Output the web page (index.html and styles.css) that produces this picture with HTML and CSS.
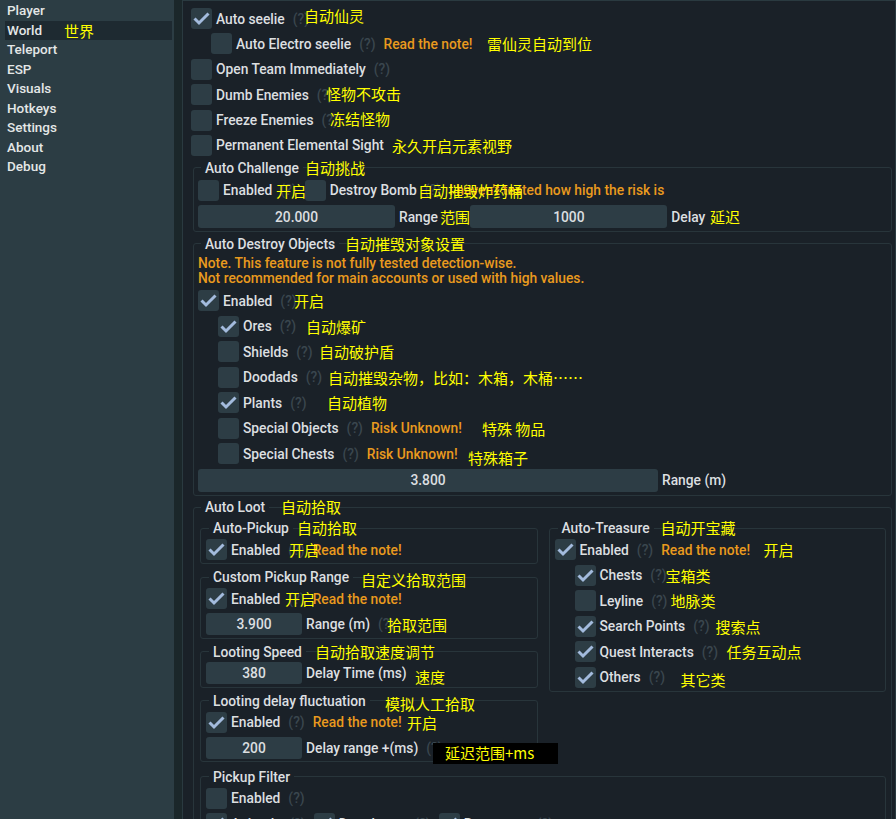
FILE: index.html
```html
<!DOCTYPE html>
<html lang="en">
<head>
<meta charset="utf-8">
<title>World</title>
<link rel="stylesheet" href="styles.css">
</head>
<body>
<div class="app">
  <nav class="sidebar">
    <div class="nav-item">Player</div>
    <div class="nav-item active">World<span class="ann a-world">世界</span></div>
    <div class="nav-item">Teleport</div>
    <div class="nav-item">ESP</div>
    <div class="nav-item">Visuals</div>
    <div class="nav-item">Hotkeys</div>
    <div class="nav-item">Settings</div>
    <div class="nav-item">About</div>
    <div class="nav-item">Debug</div>
  </nav>

  <main class="panel">
    <div class="stack top">
      <div class="row"><span class="cb on"><svg viewBox="0 0 21 21"><path d="M3.5 10.5 L8 15 L17.5 5.5"/></svg></span><span class="lbl">Auto seelie</span><span class="q">(?)</span><span class="ann a-seelie">自动仙灵</span></div>
      <div class="row indent"><span class="cb"></span><span class="lbl">Auto Electro seelie</span><span class="q">(?)</span><span class="warn">Read the note!</span><span class="ann a-electro">雷仙灵自动到位</span></div>
      <div class="row"><span class="cb"></span><span class="lbl">Open Team Immediately</span><span class="q">(?)</span></div>
      <div class="row"><span class="cb"></span><span class="lbl">Dumb Enemies</span><span class="q">(?)</span><span class="ann a-dumb">怪物不攻击</span></div>
      <div class="row"><span class="cb"></span><span class="lbl">Freeze Enemies</span><span class="q">(?)</span><span class="ann a-freeze">冻结怪物</span></div>
      <div class="row"><span class="cb"></span><span class="lbl">Permanent Elemental Sight</span><span class="ann a-sight">永久开启元素视野</span></div>

      <fieldset class="frame first">
        <legend>Auto Challenge<span class="ann lg a-lg-ac">自动挑战</span></legend>
        <div class="stack">
          <div class="row"><span class="cb"></span><span class="lbl">Enabled</span><span class="q">(?)</span><span class="cb gap"></span><span class="lbl">Destroy Bomb</span><span class="q">(?)</span><span class="warn">I haven't tested how high the risk is</span><span class="ann a-ac-en">开启</span><span class="ann a-bomb">自动摧毁炸药桶</span></div>
          <div class="row tall"><span class="inp w-half">20.000</span><span class="lbl2">Range</span><span class="q">(?)</span><span class="inp w-half gap">1000</span><span class="lbl2">Delay</span><span class="ann a-range">范围</span><span class="ann a-delay">延迟</span></div>
        </div>
      </fieldset>

      <fieldset class="frame">
        <legend>Auto Destroy Objects<span class="ann lg a-lg-ad">自动摧毁对象设置</span></legend>
        <div class="stack">
          <p class="note">Note. This feature is not fully tested detection-wise.<br>Not recommended for main accounts or used with high values.</p>
          <div class="row"><span class="cb on"><svg viewBox="0 0 21 21"><path d="M3.5 10.5 L8 15 L17.5 5.5"/></svg></span><span class="lbl">Enabled</span><span class="q">(?)</span><span class="ann a-ad-en">开启</span></div>
          <div class="row indent"><span class="cb on"><svg viewBox="0 0 21 21"><path d="M3.5 10.5 L8 15 L17.5 5.5"/></svg></span><span class="lbl">Ores</span><span class="q">(?)</span><span class="ann a-ores">自动爆矿</span></div>
          <div class="row indent"><span class="cb"></span><span class="lbl">Shields</span><span class="q">(?)</span><span class="ann a-shields">自动破护盾</span></div>
          <div class="row indent"><span class="cb"></span><span class="lbl">Doodads</span><span class="q">(?)</span><span class="ann a-doodads">自动摧毁杂物，比如：木箱，木桶……</span></div>
          <div class="row indent"><span class="cb on"><svg viewBox="0 0 21 21"><path d="M3.5 10.5 L8 15 L17.5 5.5"/></svg></span><span class="lbl">Plants</span><span class="q">(?)</span><span class="ann a-plants">自动植物</span></div>
          <div class="row indent"><span class="cb"></span><span class="lbl">Special Objects</span><span class="q">(?)</span><span class="warn">Risk Unknown!</span><span class="ann a-specobj">特殊 物品</span></div>
          <div class="row indent"><span class="cb"></span><span class="lbl">Special Chests</span><span class="q">(?)</span><span class="warn">Risk Unknown!</span><span class="ann a-specchest">特殊箱子</span></div>
          <div class="row tall"><span class="inp w-wide">3.800</span><span class="lbl2">Range (m)</span></div>
        </div>
      </fieldset>

      <fieldset class="frame loot">
        <legend>Auto Loot<span class="ann lg a-lg-al">自动拾取</span></legend>
        <div class="cols">
          <div class="col">
            <fieldset class="frame sub">
              <legend>Auto-Pickup<span class="ann lg a-lg-ap">自动拾取</span></legend>
              <div class="stack">
                <div class="row"><span class="cb on"><svg viewBox="0 0 21 21"><path d="M3.5 10.5 L8 15 L17.5 5.5"/></svg></span><span class="lbl">Enabled</span><span class="q">(?)</span><span class="warn">Read the note!</span><span class="ann a-ap-en">开启</span></div>
              </div>
            </fieldset>
            <fieldset class="frame sub">
              <legend>Custom Pickup Range<span class="ann lg a-lg-cp">自定义拾取范围</span></legend>
              <div class="stack">
                <div class="row"><span class="cb on"><svg viewBox="0 0 21 21"><path d="M3.5 10.5 L8 15 L17.5 5.5"/></svg></span><span class="lbl">Enabled</span><span class="q">(?)</span><span class="warn">Read the note!</span><span class="ann a-cp-en">开启</span></div>
                <div class="row"><span class="inp w-small">3.900</span><span class="lbl2">Range (m)</span><span class="q">(?)</span><span class="ann a-cp-range">拾取范围</span></div>
              </div>
            </fieldset>
            <fieldset class="frame sub">
              <legend>Looting Speed<span class="ann lg a-lg-ls">自动拾取速度调节</span></legend>
              <div class="stack">
                <div class="row"><span class="inp w-small">380</span><span class="lbl2">Delay Time (ms)</span><span class="ann a-ls-speed">速度</span></div>
              </div>
            </fieldset>
            <fieldset class="frame sub">
              <legend>Looting delay fluctuation<span class="ann lg a-lg-ld">模拟人工拾取</span></legend>
              <div class="stack">
                <div class="row"><span class="cb on"><svg viewBox="0 0 21 21"><path d="M3.5 10.5 L8 15 L17.5 5.5"/></svg></span><span class="lbl">Enabled</span><span class="q">(?)</span><span class="warn">Read the note!</span><span class="ann a-ld-en">开启</span></div>
                <div class="row"><span class="inp w-small">200</span><span class="lbl2">Delay range +(ms)</span><span class="q">(?)</span><span class="ann a-ld-box">延迟范围+ms</span></div>
              </div>
            </fieldset>
          </div>

          <div class="col">
            <fieldset class="frame sub">
              <legend>Auto-Treasure<span class="ann lg a-lg-at">自动开宝藏</span></legend>
              <div class="stack">
                <div class="row"><span class="cb on"><svg viewBox="0 0 21 21"><path d="M3.5 10.5 L8 15 L17.5 5.5"/></svg></span><span class="lbl">Enabled</span><span class="q">(?)</span><span class="warn">Read the note!</span><span class="ann a-at-en">开启</span></div>
                <div class="row indent"><span class="cb on"><svg viewBox="0 0 21 21"><path d="M3.5 10.5 L8 15 L17.5 5.5"/></svg></span><span class="lbl">Chests</span><span class="q">(?)</span><span class="ann a-chests">宝箱类</span></div>
                <div class="row indent"><span class="cb"></span><span class="lbl">Leyline</span><span class="q">(?)</span><span class="ann a-leyline">地脉类</span></div>
                <div class="row indent"><span class="cb on"><svg viewBox="0 0 21 21"><path d="M3.5 10.5 L8 15 L17.5 5.5"/></svg></span><span class="lbl">Search Points</span><span class="q">(?)</span><span class="ann a-search">搜索点</span></div>
                <div class="row indent"><span class="cb on"><svg viewBox="0 0 21 21"><path d="M3.5 10.5 L8 15 L17.5 5.5"/></svg></span><span class="lbl">Quest Interacts</span><span class="q">(?)</span><span class="ann a-quest">任务互动点</span></div>
                <div class="row indent"><span class="cb on"><svg viewBox="0 0 21 21"><path d="M3.5 10.5 L8 15 L17.5 5.5"/></svg></span><span class="lbl">Others</span><span class="q">(?)</span><span class="ann a-others">其它类</span></div>
              </div>
            </fieldset>
          </div>

          <fieldset class="frame sub span">
            <legend>Pickup Filter</legend>
            <div class="stack">
              <div class="row"><span class="cb"></span><span class="lbl">Enabled</span><span class="q">(?)</span></div>
              <div class="row"><span class="cb on"><svg viewBox="0 0 21 21"><path d="M3.5 10.5 L8 15 L17.5 5.5"/></svg></span><span class="lbl">Animals</span><span class="q">(?)</span><span class="cb on gap"><svg viewBox="0 0 21 21"><path d="M3.5 10.5 L8 15 L17.5 5.5"/></svg></span><span class="lbl">Drop Items</span><span class="q">(?)</span><span class="cb on gap"><svg viewBox="0 0 21 21"><path d="M3.5 10.5 L8 15 L17.5 5.5"/></svg></span><span class="lbl">Resources</span><span class="q">(?)</span></div>
            </div>
          </fieldset>
        </div>
      </fieldset>
    </div>
  </main>
</div>
</body>
</html>
```

FILE: styles.css
```css
* { box-sizing: border-box; }

html, body {
  margin: 0;
  height: 100%;
}

body {
  background: #1b272a;
  font-family: Roboto, "Noto Sans", sans-serif;
  font-weight: 500;
  font-size: 13.8px;
  color: #dcdfe0;
  overflow: hidden;
}

.app {
  display: flex;
  height: 819px;
}

/* ---------- sidebar ---------- */
.sidebar {
  width: 174px;
  flex: none;
  background: #2c3d44;
  padding-top: 1.25px;
  font-size: 13.5px;
}

.nav-item {
  position: relative;
  height: 19.5px;
  line-height: 19.5px;
  margin: 0 2px 0 5px;
  padding-left: 2px;
  color: #e4e7e7;
}

.nav-item.active {
  background: #1e2a31;
}

/* ---------- main panel ---------- */
.panel {
  flex: 1;
  margin-left: 8px;
  background: #1a2128;
  border: 1px solid #2a3a40;
  border-bottom: none;
  padding: 7px 3px 0 8px;
  overflow: hidden;
}

.stack {
  display: flex;
  flex-direction: column;
  gap: 4.5px;
}

.stack.top { gap: 4.4px; }

.row {
  position: relative;
  display: flex;
  align-items: center;
  height: 21px;
  white-space: nowrap;
}

.row.tall { height: 23px; }

.row.indent { padding-left: 20px; }

.cb {
  flex: none;
  width: 21px;
  height: 21px;
  border-radius: 3px;
  background: #2d3d45;
}

.cb svg {
  display: block;
  width: 21px;
  height: 21px;
  fill: none;
  stroke: #a3bbdd;
  stroke-width: 3;
}

.cb.gap { margin-left: 8px; }

.lbl { margin-left: 4px; }
.lbl2 { margin-left: 4px; }

.q {
  margin-left: 8px;
  color: #3a474f;
}

.warn {
  margin-left: 8px;
  color: #e99a1e;
}

.inp {
  flex: none;
  display: flex;
  align-items: center;
  justify-content: center;
  height: 100%;
  border-radius: 3px;
  background: #2d3d45;
  color: #dcdfe0;
}

.row:not(.tall) .inp { height: 22px; }

.inp.gap { margin-left: 8px; }

.w-half { width: 197px; }
.w-wide { width: 460px; }
.w-small { width: 96px; }

.note {
  margin: 0;
  color: #e99a1e;
  line-height: 15px;
  white-space: nowrap;
}

/* ---------- frames ---------- */
.frame {
  min-width: 0;
  margin: 0 0 0 2px;
  padding: 5px 4px 3px 4px;
  border: 1px solid #28353b;
  border-radius: 3px;
}

.frame.first { margin-top: 0.5px; }

.frame > legend {
  position: relative;
  margin-left: 3px;
  padding: 0 4px;
  line-height: 14px;
  white-space: nowrap;
}

.frame.loot { padding-right: 5px; }

.frame.sub {
  margin: 0;
  padding: 4px 3px 3px 5px;
}

.cols {
  display: grid;
  grid-template-columns: 1fr 1fr;
  column-gap: 11px;
  row-gap: 7.5px;
  padding-left: 2px;
  margin-top: 2px;
  align-items: start;
}

.col {
  display: flex;
  flex-direction: column;
  gap: 6px;
}

.span { grid-column: 1 / -1; }

/* ---------- yellow annotations (overlay callouts) ---------- */
.ann {
  position: absolute;
  top: 0;
  line-height: 21px;
  font-family: "Noto Sans CJK SC", sans-serif;
  font-weight: 400;
  font-size: 15px;
  color: #ffff00;
  white-space: nowrap;
}

.ann.lg {
  line-height: 14px;
}

.nav-item .ann { line-height: 19.5px; font-size: 15px; }

.a-world { left: 59px; }

.a-seelie { left: 113px; top: -3px; }
.a-electro { left: 296px; }
.a-dumb { left: 135px; top: -1.5px; }
.a-freeze { left: 139px; top: -2px; }
.a-sight { left: 201px; }

.a-lg-ac { left: 104px; }
.a-ac-en { left: 78px; }
.a-bomb { left: 220px; }
.a-range { left: 242px; top: 1px; }
.a-delay { left: 512px; top: 1px; }

.a-lg-ad { left: 144px; }
.a-ad-en { left: 96px; }
.a-ores { left: 108px; }
.a-shields { left: 121px; }
.a-doodads { left: 130px; }
.a-plants { left: 129px; }
.a-specobj { left: 284px; }
.a-specchest { left: 270px; top: 4px; }

.a-lg-al { left: 80px; }
.a-lg-ap { left: 88px; }
.a-ap-en { left: 83px; }
.a-lg-cp { left: 152px; top: 3px; }
.a-cp-en { left: 79px; }
.a-cp-range { left: 181px; }
.a-lg-ls { left: 106px; }
.a-ls-speed { left: 209px; top: 3px; }
.a-lg-ld { left: 176px; top: 3px; }
.a-ld-en { left: 201px; }
.a-ld-box {
  left: 227px;
  top: 6px;
  width: 125px;
  height: 21px;
  padding-left: 12px;
  background: #000;
  line-height: 20px;
}

.a-lg-at { left: 103px; }
.a-at-en { left: 209px; }
.a-chests { left: 111px; }
.a-leyline { left: 116px; }
.a-search { left: 161px; }
.a-quest { left: 172px; }
.a-others { left: 126px; top: 2px; }
```
